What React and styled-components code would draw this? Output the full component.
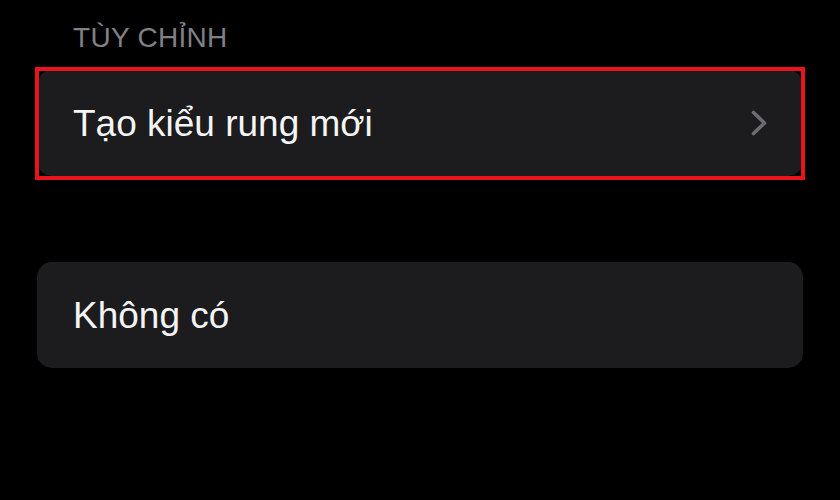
import styled, { createGlobalStyle } from "styled-components";

const GlobalStyle = createGlobalStyle`
  html, body {
    margin: 0;
    padding: 0;
    background: #000;
  }
  body {
    font-family: "Liberation Sans", Arial, sans-serif;
    -webkit-font-smoothing: antialiased;
  }
`;

export default function App() {
  return (
    <>
      <GlobalStyle />
      <Page>
        <SectionHeader>TÙY CHỈNH</SectionHeader>
        <Cell highlighted>
          <CellLabel>Tạo kiểu rung mới</CellLabel>
          <Chevron viewBox="0 0 16 26" aria-hidden="true">
            <path d="M2.5 2.5 L13.5 13 L2.5 23.5" />
          </Chevron>
        </Cell>
        <Cell spaced>
          <CellLabel>Không có</CellLabel>
        </Cell>
      </Page>
    </>
  );
};

const Page = styled.div`
  width: 840px;
  height: 500px;
  box-sizing: border-box;
  padding: 22px 37px 0 37px;
  background: #000;
  display: flex;
  flex-direction: column;
`;

const SectionHeader = styled.div`
  margin-left: 36px;
  font-size: 28px;
  line-height: 32px;
  letter-spacing: 0.3px;
  color: #808085;
`;

const Cell = styled.div`
  position: relative;
  height: 106px;
  margin-top: ${(p) => (p.spaced ? "86px" : "16px")};
  box-sizing: border-box;
  padding: 2px 36px 0 36px;
  background: #1c1c1e;
  border-radius: 15px;
  display: flex;
  align-items: center;
  justify-content: space-between;

  ${(p) =>
    p.highlighted &&
    `
    &::after {
      content: "";
      position: absolute;
      top: -3.5px;
      bottom: -4px;
      left: -2px;
      right: -2px;
      border: 4.5px solid #e8141b;
      pointer-events: none;
    }
  `}
`;

const CellLabel = styled.span`
  font-size: 37px;
  color: #f4f4f4;
`;

const Chevron = styled.svg`
  width: 16px;
  height: 26px;
  margin-top: -2px;
  fill: none;
  stroke: #6c6c71;
  stroke-width: 3.6;
  stroke-linecap: round;
  stroke-linejoin: round;
`;
